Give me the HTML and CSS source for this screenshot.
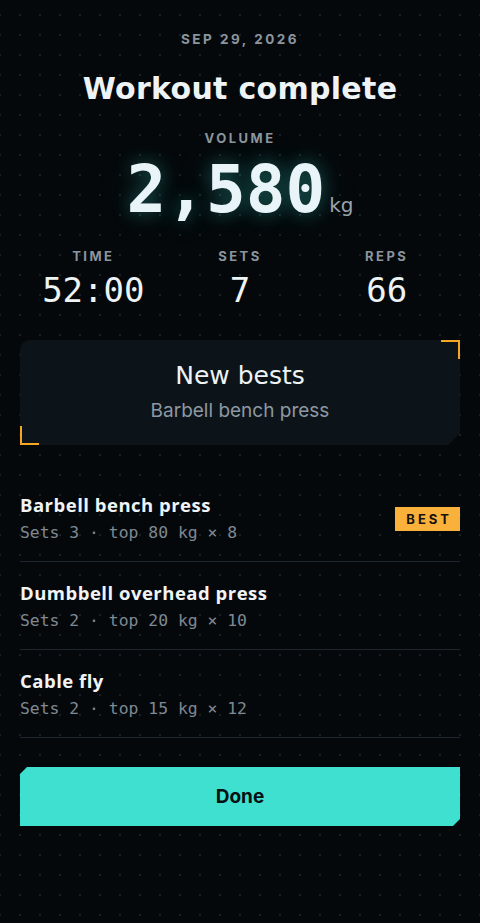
FILE: index.html
```html
<!DOCTYPE html>
<html lang="en">
<head>
    <meta charset="UTF-8">
    <meta name="viewport" content="width=device-width, initial-scale=1.0">
    <title>Workout complete</title>
    <link rel="stylesheet" href="styles.css">
</head>
<body>
    <div class="screen">
        <header class="summary">
            <p class="date">SEP 29, 2026</p>
            <h1 class="title">Workout complete</h1>
            <p class="label">VOLUME</p>
            <div class="volume">
                <span class="volume-value">2,580</span><span class="volume-unit">kg</span>
            </div>
        </header>

        <div class="stats">
            <div class="stat">
                <p class="label">TIME</p>
                <p class="stat-value">52:00</p>
            </div>
            <div class="stat">
                <p class="label">SETS</p>
                <p class="stat-value">7</p>
            </div>
            <div class="stat">
                <p class="label">REPS</p>
                <p class="stat-value">66</p>
            </div>
        </div>

        <div class="bests">
            <div class="bests-card">
                <h2 class="bests-title">New bests</h2>
                <p class="bests-text">Barbell bench press</p>
            </div>
        </div>

        <ul class="exercises">
            <li class="exercise">
                <div class="exercise-info">
                    <p class="exercise-name">Barbell bench press</p>
                    <p class="exercise-detail">Sets 3 · top 80 kg × 8</p>
                </div>
                <span class="badge">BEST</span>
            </li>
            <li class="exercise">
                <div class="exercise-info">
                    <p class="exercise-name">Dumbbell overhead press</p>
                    <p class="exercise-detail">Sets 2 · top 20 kg × 10</p>
                </div>
            </li>
            <li class="exercise">
                <div class="exercise-info">
                    <p class="exercise-name">Cable fly</p>
                    <p class="exercise-detail">Sets 2 · top 15 kg × 12</p>
                </div>
            </li>
        </ul>

        <button class="done-button">Done</button>
    </div>
</body>
</html>
```

FILE: styles.css
```css
* {
    margin: 0;
    padding: 0;
    box-sizing: border-box;
}

body {
    font-family: 'Inter', 'Noto Sans', sans-serif;
    background-color: #05080b;
    background-image: radial-gradient(circle, #172028 1px, transparent 1.2px);
    background-size: 20px 20px;
    background-position: -10px 5px;
    color: #eef3f6;
    min-height: 100vh;
}

.screen {
    padding: 31px 20px 40px;
}

.summary {
    display: flex;
    flex-direction: column;
    align-items: center;
}

.date {
    font-size: 13.5px;
    font-weight: 700;
    letter-spacing: 2.5px;
    color: #8b959e;
    line-height: 16px;
}

.title {
    font-family: 'DejaVu Sans', sans-serif;
    font-size: 30px;
    font-weight: 700;
    letter-spacing: 0.3px;
    color: #eef3f6;
    margin-top: 22px;
    line-height: 40px;
}

.label {
    font-size: 13px;
    font-weight: 700;
    letter-spacing: 2.5px;
    color: #8b959e;
    line-height: 16px;
}

.summary .label {
    margin-top: 21px;
}

.volume {
    display: flex;
    align-items: baseline;
    margin-top: 6px;
}

.volume-value {
    font-family: 'DejaVu Sans Mono', monospace;
    font-size: 66px;
    font-weight: 700;
    line-height: 76px;
    color: #e8f4f8;
    text-shadow: 0 0 18px rgba(64, 224, 208, 0.35), 0 0 40px rgba(64, 224, 208, 0.15);
}

.volume-unit {
    font-family: 'DejaVu Sans', sans-serif;
    font-size: 20px;
    color: #9aa4ad;
    margin-left: 4px;
}

.stats {
    display: grid;
    grid-template-columns: repeat(3, 1fr);
    margin-top: 20px;
    text-align: center;
}

.stat-value {
    font-family: 'DejaVu Sans Mono', monospace;
    font-size: 34px;
    font-weight: 500;
    line-height: 40px;
    color: #eef3f6;
    margin-top: 6px;
}

.bests {
    position: relative;
    margin-top: 30px;
}

.bests::before,
.bests::after {
    content: "";
    position: absolute;
    z-index: 1;
    width: 17px;
    height: 17px;
    border: 0 solid #f5a623;
}

.bests::before {
    top: 0;
    right: 0;
    border-top-width: 2px;
    border-right-width: 2px;
}

.bests::after {
    bottom: 0;
    left: 0;
    border-bottom-width: 2px;
    border-left-width: 2px;
}

.bests-card {
    background: #0d1419;
    border-radius: 10px 0 0 0;
    clip-path: polygon(0 0, 100% 0, 100% calc(100% - 12px), calc(100% - 12px) 100%, 0 100%);
    padding: 21px 16px 20px;
    text-align: center;
    height: 105px;
}

.bests-title {
    font-family: 'DejaVu Sans', sans-serif;
    font-size: 25px;
    font-weight: 400;
    color: #eef3f6;
    line-height: 30px;
}

.bests-text {
    font-size: 19px;
    color: #8d98a2;
    margin-top: 8px;
    line-height: 24px;
}

.exercises {
    list-style: none;
    margin-top: 49px;
}

.exercise {
    display: flex;
    justify-content: space-between;
    align-items: center;
    border-bottom: 1px solid #1e2630;
    padding: 20px 0 18px;
}

.exercise:first-child {
    padding-top: 0;
}

.exercise-name {
    font-family: 'Open Sans', sans-serif;
    font-size: 18.5px;
    font-weight: 700;
    letter-spacing: 0.5px;
    color: #f1f4f6;
    line-height: 22px;
}

.exercise-detail {
    font-family: 'DejaVu Sans Mono', monospace;
    font-size: 16.4px;
    color: #7f8992;
    margin-top: 7px;
    line-height: 20px;
}

.badge {
    background: #f9b13c;
    color: #17120a;
    font-size: 13px;
    font-weight: 700;
    letter-spacing: 3px;
    padding: 4px 8px 4px 11px;
    line-height: 16px;
}

.done-button {
    display: block;
    width: 100%;
    height: 59px;
    margin-top: 29px;
    background: #40e0d0;
    color: #071012;
    font-family: 'Inter', sans-serif;
    font-size: 19px;
    font-weight: 700;
    border: none;
    clip-path: polygon(7px 0, 100% 0, 100% calc(100% - 7px), calc(100% - 7px) 100%, 0 100%, 0 7px);
    cursor: pointer;
}
```
